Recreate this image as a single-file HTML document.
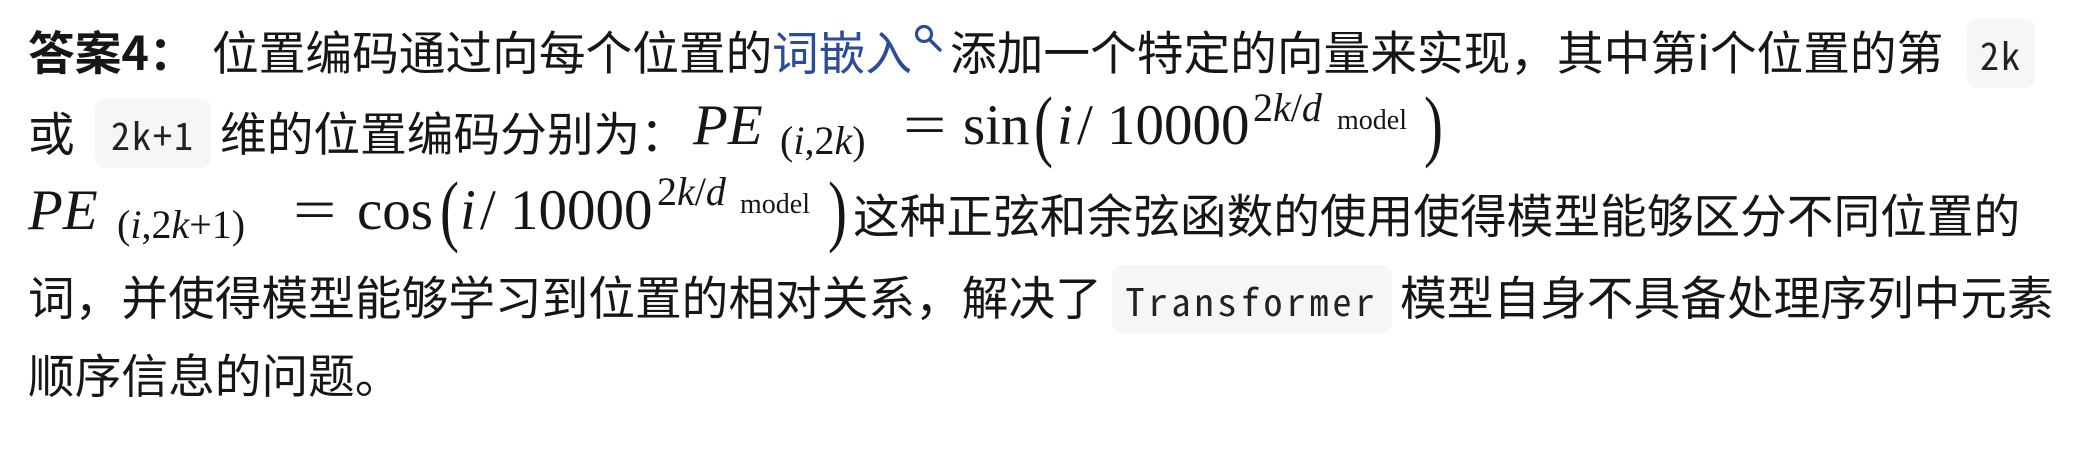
<!DOCTYPE html>
<html><head><meta charset="utf-8">
<style>
html,body{margin:0;padding:0;background:#fff;}
body{width:2081px;height:456px;position:relative;overflow:hidden;color:#161616;}
.t{position:absolute;white-space:nowrap;font-family:"Noto Sans CJK SC","Liberation Sans",sans-serif;font-size:46.7px;line-height:46.7px;}
.b{font-weight:bold;}
.blue{color:#2b4b9b;}
.code{position:absolute;background:#f6f6f8;border-radius:10px;display:flex;align-items:center;justify-content:center;font-family:"Noto Sans Mono CJK SC","DejaVu Sans Mono","Liberation Mono",monospace;font-size:38px;letter-spacing:4px;color:#222;}
.m{position:absolute;white-space:nowrap;font-family:"Liberation Serif","DejaVu Serif",serif;line-height:1;}
.i{font-style:italic;}
.f56{font-size:57px;}
.f39{font-size:40px;}
.f28{font-size:28px;}
.big{display:inline-block;transform:scaleY(1.4);}
.eq{display:inline-block;transform:scaleX(1.35);transform-origin:left;}
</style></head><body>
<!-- line 1 -->
<div class="t b" style="left:28px;top:28px;">答案4：</div>
<div class="t" style="left:212px;top:28px;">位置编码通过向每个位置的</div>
<div class="t blue" style="left:772px;top:28px;">词嵌入</div>
<svg style="position:absolute;left:912px;top:22px" width="40" height="36" viewBox="0 0 40 36"><circle cx="12" cy="12" r="7.5" fill="none" stroke="#2b4b9b" stroke-width="3.2"/><line x1="17.5" y1="17.5" x2="28" y2="28" stroke="#2b4b9b" stroke-width="3.4" stroke-linecap="round"/></svg>
<div class="t" style="left:950px;top:28px;">添加一个特定的向量来实现，其中第i个位置的第</div>
<div class="code" style="left:1967px;top:19px;width:68px;height:69px;letter-spacing:2px;">2k</div>

<!-- line 2 -->
<div class="t" style="left:28px;top:109px;">或</div>
<div class="code" style="left:95px;top:99px;width:116px;height:69px;letter-spacing:2px;">2k+1</div>
<div class="t" style="left:220px;top:109px;">维的位置编码分别为：</div>
<div class="m f56 i" style="left:693px;top:97px;">PE</div>
<div class="m f39" style="left:780px;top:121px;">(<span class="i">i</span>,2<span class="i">k</span>)</div>
<div class="m f56" style="left:903px;top:97px;"><span class="eq">=</span></div>
<div class="m f56" style="left:963px;top:97px;">sin</div>
<div class="m f56" style="left:1034px;top:97px;"><span class="big">(</span></div>
<div class="m f56 i" style="left:1057px;top:97px;">i</div>
<div class="m f56" style="left:1077px;top:97px;">/</div>
<div class="m f56" style="left:1107px;top:97px;">10000</div>
<div class="m f39" style="left:1253px;top:88px;">2<span class="i">k</span>/<span class="i">d</span></div>
<div class="m f28" style="left:1337px;top:107px;">model</div>
<div class="m f56" style="left:1424px;top:97px;"><span class="big">)</span></div>

<!-- line 3 -->
<div class="m f56 i" style="left:28px;top:182px;">PE</div>
<div class="m f39" style="left:117px;top:205px;">(<span class="i">i</span>,2<span class="i">k</span>+1)</div>
<div class="m f56" style="left:293px;top:182px;"><span class="eq">=</span></div>
<div class="m f56" style="left:357px;top:182px;">cos</div>
<div class="m f56" style="left:440px;top:182px;"><span class="big">(</span></div>
<div class="m f56 i" style="left:460px;top:182px;">i</div>
<div class="m f56" style="left:480px;top:182px;">/</div>
<div class="m f56" style="left:510px;top:182px;">10000</div>
<div class="m f39" style="left:657px;top:172px;">2<span class="i">k</span>/<span class="i">d</span></div>
<div class="m f28" style="left:740px;top:191px;">model</div>
<div class="m f56" style="left:828px;top:182px;"><span class="big">)</span></div>
<div class="t" style="left:853px;top:191px;">这种正弦和余弦函数的使用使得模型能够区分不同位置的</div>

<!-- line 4 -->
<div class="t" style="left:28px;top:273px;">词，并使得模型能够学习到位置的相对关系，解决了</div>
<div class="code" style="left:1112px;top:265px;width:280px;height:68px;">Transformer</div>
<div class="t" style="left:1400px;top:273px;">模型自身不具备处理序列中元素</div>

<!-- line 5 -->
<div class="t" style="left:28px;top:351px;">顺序信息的问题。</div>
</body></html>
